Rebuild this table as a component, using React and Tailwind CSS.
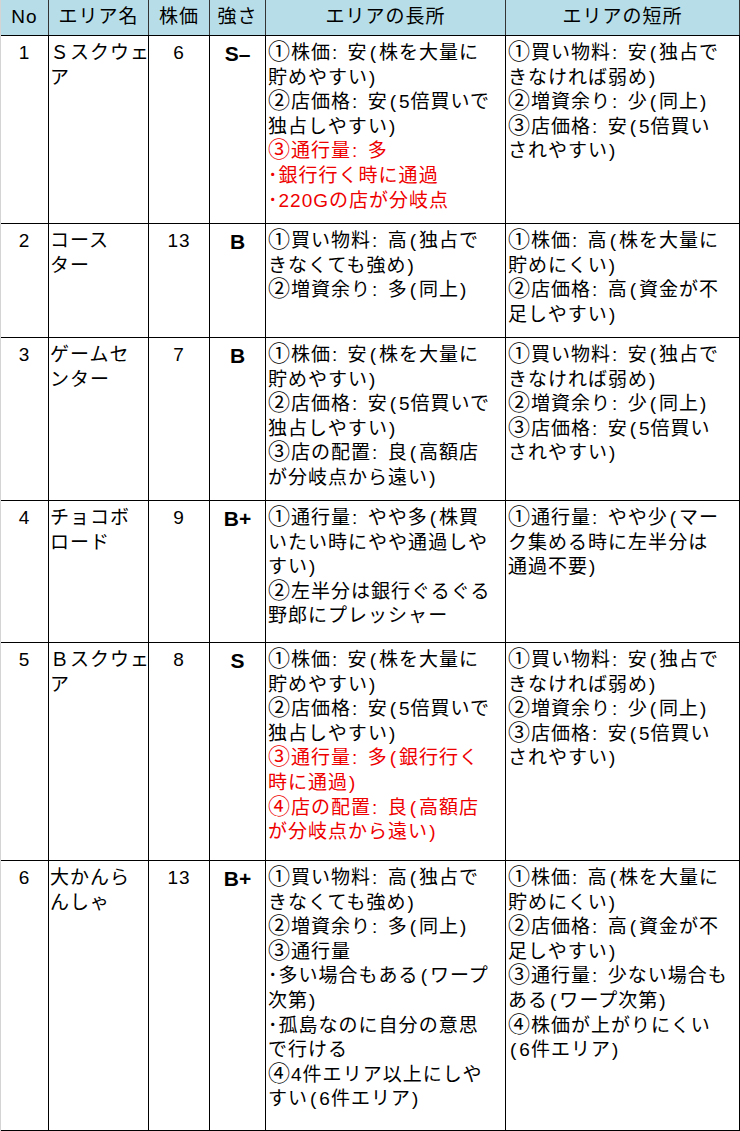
const RED = "red";

const SHORT_CHEAP = [
  "①買い物料: 安(独占で",
  "きなければ弱め)",
  "②増資余り: 少(同上)",
  "③店価格: 安(5倍買い",
  "されやすい)",
];

const rows = [
  {
    no: "1",
    name: ["Ｓスクウェ", "ア"],
    price: "6",
    rank: "S–",
    h: "h-[188px]",
    pros: [
      "①株価: 安(株を大量に",
      "貯めやすい)",
      "②店価格: 安(5倍買いで",
      "独占しやすい)",
      [RED, "③通行量: 多"],
      [RED, "･銀行行く時に通過"],
      [RED, "･220Gの店が分岐点"],
    ],
    cons: SHORT_CHEAP,
  },
  {
    no: "2",
    name: ["コース", "ター"],
    price: "13",
    rank: "B",
    h: "h-[114px]",
    pros: ["①買い物料: 高(独占で", "きなくても強め)", "②増資余り: 多(同上)"],
    cons: ["①株価: 高(株を大量に", "貯めにくい)", "②店価格: 高(資金が不", "足しやすい)"],
  },
  {
    no: "3",
    name: ["ゲームセ", "ンター"],
    price: "7",
    rank: "B",
    h: "h-[163px]",
    pros: [
      "①株価: 安(株を大量に",
      "貯めやすい)",
      "②店価格: 安(5倍買いで",
      "独占しやすい)",
      "③店の配置: 良(高額店",
      "が分岐点から遠い)",
    ],
    cons: SHORT_CHEAP,
  },
  {
    no: "4",
    name: ["チョコボ", "ロード"],
    price: "9",
    rank: "B+",
    h: "h-[142px]",
    pros: [
      "①通行量: やや多(株買",
      "いたい時にやや通過しや",
      "すい)",
      "②左半分は銀行ぐるぐる",
      "野郎にプレッシャー",
    ],
    cons: ["①通行量: やや少(マー", "ク集める時に左半分は", "通過不要)"],
  },
  {
    no: "5",
    name: ["Ｂスクウェ", "ア"],
    price: "8",
    rank: "S",
    h: "h-[218px]",
    pros: [
      "①株価: 安(株を大量に",
      "貯めやすい)",
      "②店価格: 安(5倍買いで",
      "独占しやすい)",
      [RED, "③通行量: 多(銀行行く"],
      [RED, "時に通過)"],
      [RED, "④店の配置: 良(高額店"],
      [RED, "が分岐点から遠い)"],
    ],
    cons: SHORT_CHEAP,
  },
  {
    no: "6",
    name: ["大かんら", "んしゃ"],
    price: "13",
    rank: "B+",
    h: "h-[270px]",
    pros: [
      "①買い物料: 高(独占で",
      "きなくても強め)",
      "②増資余り: 多(同上)",
      "③通行量",
      "･多い場合もある(ワープ",
      "次第)",
      "･孤島なのに自分の意思",
      "で行ける",
      "④4件エリア以上にしや",
      "すい(6件エリア)",
    ],
    cons: [
      "①株価: 高(株を大量に",
      "貯めにくい)",
      "②店価格: 高(資金が不",
      "足しやすい)",
      "③通行量: 少ない場合も",
      "ある(ワープ次第)",
      "④株価が上がりにくい",
      "(6件エリア)",
    ],
  },
];

const cols = "grid grid-cols-[48px_100px_61px_56px_240px_234px]";

// widen the circled numbers and half-width punctuation a bit, like the sheet font does
function Text({ s }) {
  return Array.from(s).map((c, i) => {
    if ("①②③④".includes(c)) return <span key={i} className="text-[22px] leading-[0] tracking-[0px] mr-[1px]">{c}</span>;
    if (c === "(") return <span key={i} className="ml-[2px] mr-[2px]">{c}</span>;
    if (c === ")") return <span key={i} className="ml-[1px]">{c}</span>;
    if (c === ":") return <span key={i} className="ml-[1px] mr-[3px]">{c}</span>;
    return c;
  });
}

function Lines({ lines }) {
  return (
    <div>
      {lines.map((l, i) =>
        Array.isArray(l) ? (
          <div key={i} className="whitespace-nowrap text-[#ee0000]"><Text s={l[1]} /></div>
        ) : (
          <div key={i} className="whitespace-nowrap"><Text s={l} /></div>
        )
      )}
    </div>
  );
}

export default function App() {
  return (
    <div className="w-[740px] h-[1131px] bg-white border-l border-[#d4d4d4] text-black font-['Liberation_Sans','Noto_Sans_CJK_JP',sans-serif] text-[19px] leading-[24.6px] tracking-[1px] overflow-hidden">
      <div className={`${cols} h-[36px] bg-[#b7dee8] border-b border-black`}>
        {["No", "エリア名", "株価", "強さ", "エリアの長所", "エリアの短所"].map((t) => (
          <div key={t} className="flex items-center justify-center border-r border-[#333] whitespace-nowrap">
            {t}
          </div>
        ))}
      </div>
      {rows.map((r) => (
        <div key={r.no} className={`${cols} ${r.h} border-b border-black`}>
          <div className="border-r border-black text-center pt-[5px]">{r.no}</div>
          <div className="border-r border-black pl-[1px] pt-[5px]">
            <Lines lines={r.name} />
          </div>
          <div className="border-r border-black text-center pt-[5px]">{r.price}</div>
          <div className="border-r border-black text-center pt-[6px] font-bold text-[21px] tracking-normal">
            {r.rank}
          </div>
          <div className="border-r border-black pl-[2px] pt-[5px]">
            <Lines lines={r.pros} />
          </div>
          <div className="border-r border-black pl-[2px] pt-[5px]">
            <Lines lines={r.cons} />
          </div>
        </div>
      ))}
    </div>
  );
}
